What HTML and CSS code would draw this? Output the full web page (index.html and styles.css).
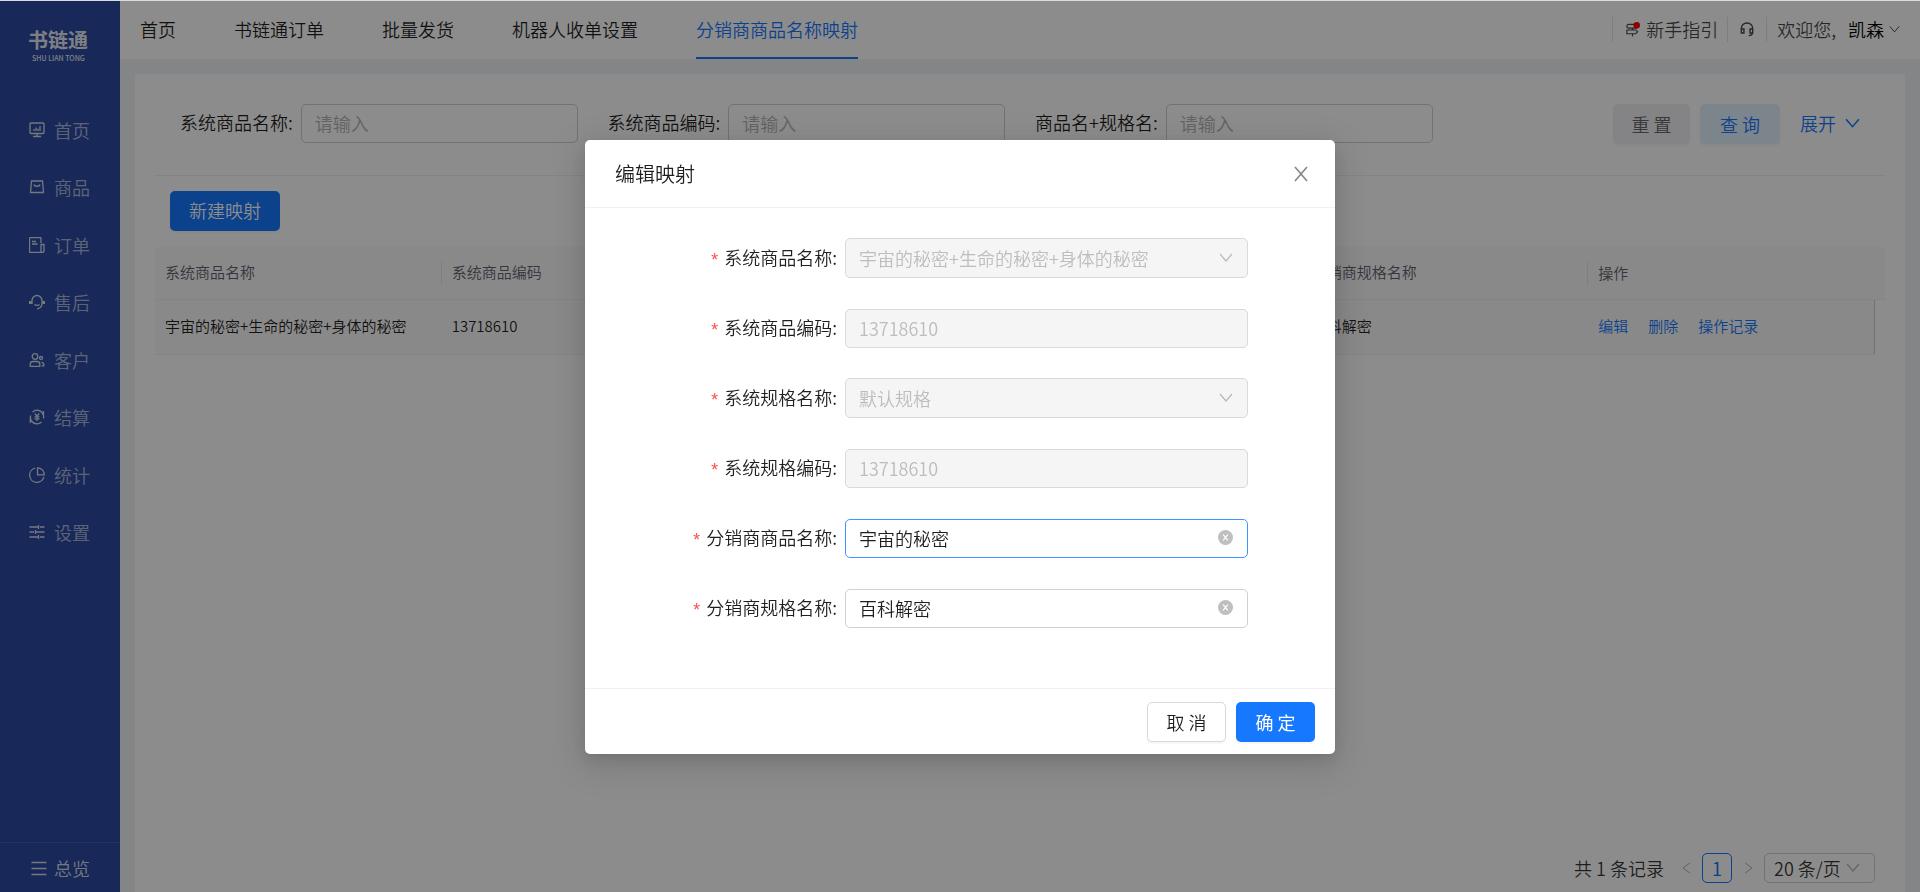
FILE: index.html
```html
<!DOCTYPE html>
<html lang="zh-CN">
<head>
<meta charset="utf-8">
<meta name="viewport" content="width=device-width, initial-scale=1">
<title>分销商商品名称映射</title>
<link rel="stylesheet" href="styles.css">
</head>
<body>
<div class="app">
  <aside class="sidebar">
    <div class="logo"><span class="logo-name">书链通</span><span class="logo-latin">SHU LIAN TONG</span></div>
    <nav class="side-nav">
      <a class="side-link" href="#"><svg class="side-icon" viewBox="0 0 16 16"><rect x="1" y="1" width="14" height="10.5" rx="1"/><path d="M8 11.5v3M4 14.5h8M5 9V7M7 9V5.500M9 9V6.500M11 9V4"/></svg>首页</a>
      <a class="side-link" href="#"><svg class="side-icon" viewBox="0 0 16 16"><path d="M2.500 2h11l1 11.500h-13zM5 5.500c.5 2.300 5.500 2.300 6 0"/></svg>商品</a>
      <a class="side-link" href="#"><svg class="side-icon" viewBox="0 0 16 16"><path d="M12 6V1.500a1 1 0 0 0-1-1H1.500a1 1 0 0 0-1 1v13a1 1 0 0 0 1 1h12a1.500 1.500 0 0 0 1.500-1.500V7.500h-3v6.500a1.500 1.500 0 0 0 1.500 1.500M3 4.500h4M3 7h5.500"/></svg>订单</a>
      <a class="side-link" href="#"><svg class="side-icon" viewBox="0 0 16 16"><path d="M3 10V6.500a5 5 0 0 1 10 0V9c0 3-1.500 5.500-5 5.800M5.500 10.500c1.200 1.200 3.800 1.200 5 0"/><path class="thick" d="M1.300 7v3M14.700 7v3"/></svg>售后</a>
      <a class="side-link" href="#"><svg class="side-icon" viewBox="0 0 16 16"><circle cx="6" cy="4.500" r="2.800"/><path d="M1.200 14.300v-2a2.800 2.800 0 0 1 2.800-2.800h4a2.800 2.800 0 0 1 2.800 2.800v2zM12.500 13.800h2.300v-1.300a2 2 0 0 0-2.300-2"/><circle cx="12" cy="6" r="1.500"/></svg>客户</a>
      <a class="side-link" href="#"><svg class="side-icon" viewBox="0 0 16 16"><path d="M3 12.500A6.600 6.600 0 0 1 1.600 6.500M3.500 3A6.700 6.700 0 0 1 13.500 4M14.500 2v3.500M13 3.500A6.600 6.600 0 0 1 14.400 9.500M12.500 13A6.700 6.700 0 0 1 2.500 12M1.300 14V9.500M5.800 4.500 8 7.200l2.200-2.700M8 7.200V12M5.500 7.800h5M5.500 9.800h5"/></svg>结算</a>
      <a class="side-link" href="#"><svg class="side-icon" viewBox="0 0 16 16"><path d="M6 1.200A7.200 7.200 0 1 0 14.800 10M8.500.8v7h6.800A7 7 0 0 0 8.500.8z"/></svg>统计</a>
      <a class="side-link" href="#"><svg class="side-icon" viewBox="0 0 16 16"><path d="M.5 3h8.500M11 3h4.500M9.500 1v4M.5 8h4.500M7 8h8.500M6.500 6v4M.5 13h8.500M11 13h4.500M9.500 11v4"/></svg>设置</a>
    </nav>
    <a class="side-total" href="#"><svg class="side-icon" viewBox="0 0 16 16"><path d="M.5 2.500h15M.5 8.500h15M.5 14.500h15"/></svg>总览</a>
  </aside>

  <div class="main">
    <header class="topbar">
      <nav class="tabs">
        <a class="tab" href="#">首页</a>
        <a class="tab" href="#">书链通订单</a>
        <a class="tab" href="#">批量发货</a>
        <a class="tab" href="#">机器人收单设置</a>
        <a class="tab tab-active" href="#">分销商商品名称映射</a>
      </nav>
      <div class="tools">
        <a class="tool tool-guide" href="#"><svg class="guide-icon" viewBox="0 0 16 16"><path d="M13 2.500H4a2 2 0 0 0 0 4h9a0 0 0 0 0 0 0M2 8.500h9.500l2 2-2 2H2zM8 6.500v2M8 12.500v3"/><circle cx="12.500" cy="3.500" r="3.500"/></svg>新手指引</a>
        <button class="tool" type="button" aria-label="客服"><svg class="head-icon" viewBox="0 0 16 16"><path d="M1.500 11V7a6.500 6.500 0 0 1 13 0v4M1.500 7.500h3V12h-3zM11.500 7.500h3V12h-3zM14 12c0 2-1.500 3-4 3"/></svg></button>
        <a class="tool" href="#"><span>欢迎您,</span><span class="user">凯森</span><svg class="arrow-small" viewBox="0 0 14 10"><path d="M1 1l6 7 6-7"/></svg></a>
      </div>
    </header>

    <main class="card">
      <form class="search">
        <div class="search-field"><label for="s1">系统商品名称:</label><input class="box" id="s1" placeholder="请输入"></div>
        <div class="search-field"><label for="s2">系统商品编码:</label><input class="box" id="s2" placeholder="请输入"></div>
        <div class="search-field"><label for="s3">商品名+规格名:</label><input class="box" id="s3" placeholder="请输入"></div>
        <div class="search-actions">
          <button class="btn btn-reset" type="button">重 置</button>
          <button class="btn btn-query" type="button">查 询</button>
          <a class="expand" href="#">展开<svg class="arrow-blue" viewBox="0 0 14 10"><path d="M1 1l6 7 6-7"/></svg></a>
        </div>
      </form>
      <div class="toolbar"><button class="btn btn-primary" type="button">新建映射</button></div>
      <table class="grid">
        <colgroup><col><col><col><col><col><col><col class="gutter"></colgroup>
        <thead><tr><th><div class="split">系统商品名称</div></th><th><div class="split">系统商品编码</div></th><th><div class="split"></div></th><th><div class="split"></div></th><th><div class="split">分销商规格名称</div></th><th>操作</th><th></th></tr></thead>
        <tbody><tr><td>宇宙的秘密+生命的秘密+身体的秘密</td><td>13718610</td><td></td><td></td><td>百科解密</td><td class="ops"><a href="#">编辑</a><a href="#">删除</a><a href="#">操作记录</a></td><td class="blank"></td></tr></tbody>
      </table>
      <div class="pager">
        <span class="total">共 1 条记录</span>
        <button class="page-step" type="button" aria-label="上一页"><svg class="step-icon" viewBox="0 0 10 14"><path d="M9 1 1 7l8 6"/></svg></button>
        <button class="page-current" type="button">1</button>
        <button class="page-step" type="button" aria-label="下一页"><svg class="step-icon" viewBox="0 0 10 14"><path d="m1 1 8 6-8 6"/></svg></button>
        <div class="page-size"><select aria-label="每页条数"><option>20 条/页</option></select><svg class="arrow-gray" viewBox="0 0 14 10"><path d="M1 1l6 7 6-7"/></svg></div>
      </div>
    </main>
  </div>
</div>

<div class="overlay">
  <section class="modal" role="dialog" aria-labelledby="modal-title">
    <header class="modal-head"><h2 id="modal-title">编辑映射</h2><button class="close" type="button" aria-label="关闭"><svg viewBox="0 0 14 16"><path d="M1 1l12 14M13 1 1 15"/></svg></button></header>
    <form class="modal-body">
      <div class="row"><label for="f1">系统商品名称:</label><div class="control"><select class="box tall" id="f1" disabled><option>宇宙的秘密+生命的秘密+身体的秘密</option></select><svg class="arrow-gray" viewBox="0 0 14 10"><path d="M1 1l6 7 6-7"/></svg></div></div>
      <div class="row"><label for="f2">系统商品编码:</label><div class="control"><input class="box" id="f2" value="13718610" disabled></div></div>
      <div class="row"><label for="f3">系统规格名称:</label><div class="control"><select class="box tall" id="f3" disabled><option>默认规格</option></select><svg class="arrow-gray" viewBox="0 0 14 10"><path d="M1 1l6 7 6-7"/></svg></div></div>
      <div class="row"><label for="f4">系统规格编码:</label><div class="control"><input class="box" id="f4" value="13718610" disabled></div></div>
      <div class="row"><label for="f5">分销商商品名称:</label><div class="control"><input class="box active" id="f5" value="宇宙的秘密"><button class="clear" type="button" aria-label="清除"><svg viewBox="0 0 16 16"><circle cx="8" cy="8" r="8"/><path d="m5.500 5 5 6M10.500 5l-5 6"/></svg></button></div></div>
      <div class="row"><label for="f6">分销商规格名称:</label><div class="control"><input class="box" id="f6" value="百科解密"><button class="clear" type="button" aria-label="清除"><svg viewBox="0 0 16 16"><circle cx="8" cy="8" r="8"/><path d="m5.500 5 5 6M10.500 5l-5 6"/></svg></button></div></div>
    </form>
    <footer class="modal-foot"><button class="btn btn-cancel" type="button">取 消</button><button class="btn btn-primary btn-ok" type="button">确 定</button></footer>
  </section>
</div>
</body>
</html>
```
FILE: styles.css
```css
* { box-sizing: border-box; }

body {
  margin: 0;
  border-top: 1px solid #d9dbdc;
  font: 350 18px/26px "Noto Sans CJK SC", sans-serif;
  color: rgba(0, 0, 0, .88);
}

button, input, select { margin: 0; padding: 0; border: 0; background: none; font: inherit; color: inherit; }
a { color: inherit; text-decoration: none; }
svg { display: block; flex: none; fill: none; stroke: currentColor; }

.app { display: flex; min-height: calc(100vh - 1px); background: #f0f2f5; }

/* Sidebar */
.sidebar { flex: none; width: 120px; display: flex; flex-direction: column; background: #2c4ba2; color: rgba(255, 255, 255, .62); }
.logo { height: 100px; padding-top: 26px; padding-left: 28px; display: flex; flex-direction: column; color: rgba(255, 255, 255, .9); }
.logo-name { font-size: 20px; line-height: 26px; font-weight: 700; }
.logo-latin { padding-left: 4px; font-size: 7px; line-height: 10px; font-weight: 500; white-space: nowrap; }
.side-nav { display: grid; grid-template-rows: repeat(8, 1fr); height: 460px; }
.side-link, .side-total { display: flex; align-items: center; gap: 9px; padding-left: 29px; }
.side-icon { width: 16px; height: 16px; stroke-width: 1.3; color: rgba(255, 255, 255, .8); }
.side-icon .thick { stroke-width: 2.6; }
.side-total { margin-top: auto; height: 50px; padding-left: 31px; gap: 7px; border-top: 1px solid rgba(255, 255, 255, .1); color: rgba(255, 255, 255, .8); }

/* Top bar */
.main { flex: 1; min-width: 0; display: flex; flex-direction: column; }
.topbar { display: flex; justify-content: space-between; height: 58px; padding: 0 20px; background: #fff; }
.tabs { display: flex; gap: 58px; }
.tab { height: 58px; padding-top: 15px; white-space: nowrap; }
.tab-active { color: #1677ff; border-bottom: 2px solid #1677ff; }
.tools { display: flex; align-items: center; height: 56px; color: rgba(0, 0, 0, .72); }
.tool { display: flex; align-items: center; height: 25px; padding: 0 12px; border-left: 1px solid #e4e6ea; }
.tool-guide { padding-right: 9px; }
.tool:last-child { padding: 0 0 0 10px; }
.user { margin: 0 5px 0 12px; color: #000; }
.guide-icon { width: 15px; height: 15px; margin-right: 6px; stroke-width: 1.2; }
.guide-icon circle { fill: #f00; stroke: none; }
.head-icon { width: 14px; height: 15px; stroke-width: 1.6; }
.arrow-small { width: 11px; height: 9px; stroke-width: 1.2; }

/* Content card */
.card { flex: 1; display: flex; flex-direction: column; margin: 15px 15px 0; padding: 0 20px 9px; background: #fff; }
.search { display: grid; grid-template-columns: repeat(4, 1fr); column-gap: 30px; height: 102px; padding: 30px 25px 0; border-bottom: 1px solid #f0f0f0; }
.search-field { display: flex; gap: 8px; min-width: 0; }
.search-field label { line-height: 37px; white-space: nowrap; }
.box { flex: 1; min-width: 0; width: 100%; height: 39px; padding: 0 13px; border: 1px solid #d0d0d0; border-radius: 5px; background: #fff; }
.search .box { padding-bottom: 1px; }
.box::placeholder { color: #b4b4b4; }
.search-actions { display: flex; justify-content: flex-end; }
.btn { height: 40px; padding: 0 19px; border-radius: 5px; white-space: nowrap; box-shadow: 0 2px 2px rgba(0, 0, 0, .04); }
.btn-reset { width: 77px; margin-right: 10px; padding: 0; background: #f0f0f4; color: #666; }
.btn-query { width: 80px; margin-right: 20px; padding: 0; background: #e2f2ff; color: #1677ff; }
.btn-primary { background: #1677ff; color: #fff; }
.toolbar .btn { padding-bottom: 2px; }
.expand { display: flex; gap: 9px; line-height: 38px; color: #1677ff; }
.arrow-blue { width: 15px; height: 11px; margin-top: 14px; stroke-width: 1.4; }
.toolbar { padding: 15px; }

/* Table */
.grid { width: 100%; table-layout: fixed; border-collapse: separate; border-spacing: 0; font-size: 15px; line-height: 22px; }
.gutter { width: 10px; }
.grid th, .grid td { padding: 0 0 2px; border-bottom: 1px solid #f0f0f0; background: #fafafa; text-align: left; font-weight: 350; white-space: nowrap; }
.grid th { height: 54px; color: #5d6470; padding: 0 0 0 10px; }
.grid th:last-child, .grid td:last-child { padding: 0; }
.grid th:first-child { border-top-left-radius: 5px; }
.grid th:last-child { border-top-right-radius: 5px; }
.split { height: 24px; border-right: 1px solid #e8e8e8; }
.grid td { height: 55px; padding-left: 10px; }
.grid .ops { border-right: 1px solid #d0d0d0; color: #1677ff; }
.ops a { margin-right: 20px; }
.grid .blank { background: #fff; border-bottom: 0; }

/* Pagination */
.pager { display: flex; justify-content: flex-end; align-items: center; margin-top: auto; padding-right: 10px; height: 30px; color: rgba(0, 0, 0, .8); }
.page-step { width: 32px; display: flex; justify-content: center; color: #a0a0a0; }
.total { margin-right: 6px; }
.step-icon { width: 9px; height: 12px; }
.page-current { width: 30px; height: 30px; border: 1px solid #1677ff; border-radius: 5px; color: #1677ff; font-weight: 400; }
.page-size { position: relative; display: flex; width: 111px; }
.page-size select { appearance: none; width: 100%; height: 30px; padding-left: 9px; border: 1px solid #d0d0d0; border-radius: 5px; }
.arrow-gray { position: absolute; right: 15px; top: calc(50% - 5px); width: 14px; height: 10px; color: #b8b8b8; stroke-width: 1.2; pointer-events: none; }

/* Dialog */
.overlay { position: fixed; inset: 1px 0 0; display: flex; justify-content: center; align-items: flex-start; padding-top: 139px; background: rgba(0, 0, 0, .45); }
.modal { width: 750px; border-radius: 5px; background: #fff; box-shadow: 0 3px 6px -4px rgba(0, 0, 0, .12), 0 6px 16px rgba(0, 0, 0, .1), 0 9px 36px 10px rgba(0, 0, 0, .1); }
.modal-head { display: flex; justify-content: space-between; align-items: center; height: 68px; padding: 0 27px 0 30px; border-bottom: 1px solid #f0f0f0; }
.modal-head h2 { margin: 0; font-size: 20px; line-height: 30px; font-weight: 350; }
.close { width: 14px; height: 16px; color: #858585; }
.close svg { width: 14px; height: 16px; stroke-width: 1.6; }
.modal-body { display: grid; row-gap: 30px; padding: 30px 87px 60px 30px; }
.row { display: flex; justify-content: flex-end; align-items: flex-end; gap: 8px; height: 40px; }
.row label { display: flex; height: 39px; line-height: 37px; white-space: nowrap; }
.row label::before { content: "*"; margin-right: 4px; padding-top: 4px; font-family: "Liberation Mono", monospace; color: #ff4d4f; }
.control { position: relative; flex: none; display: flex; width: 403px; }
.control select { appearance: none; opacity: 1; }
.control .tall { height: 40px; }
.control .box { padding-bottom: 1px; }
.control .box:disabled { background: #f5f5f5; border-color: #d9d9d9; color: #bdbdbd; }
.control .active { border-color: #4096ff; outline: 0; }
.clear { position: absolute; right: 15px; top: 11px; width: 15px; height: 15px; }
.clear svg { width: 15px; height: 15px; }
.clear circle { fill: #bfbfbf; stroke: none; }
.clear path { stroke: #fff; stroke-width: 1.3; }
.modal-foot { display: flex; justify-content: flex-end; gap: 10px; height: 66px; padding: 13px 20px 0; border-top: 1px solid #f0f0f0; }
.modal-foot .btn { width: 79px; padding: 0; }
.btn-cancel { border: 1px solid #d9d9d9; background: #fff; }
.btn-ok { font-weight: 400; }
```
